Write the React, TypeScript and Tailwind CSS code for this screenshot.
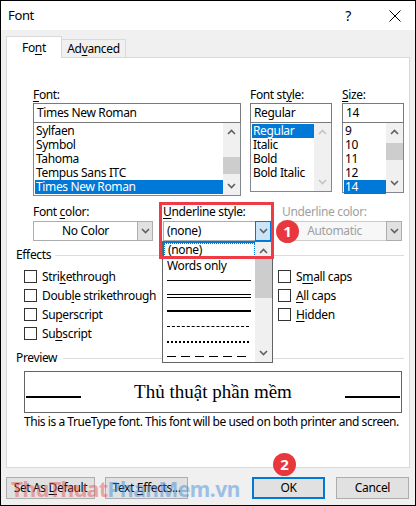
const ui = "font-['Segoe_UI','Noto_Sans',sans-serif] tracking-[-0.35px]";

function U({ children }: { children: React.ReactNode }) {
  return <span className="underline underline-offset-2">{children}</span>;
}

function Chevron({ up = false, light = false }: { up?: boolean; light?: boolean }) {
  return (
    <svg width="9" height="6" viewBox="0 0 9 6" className={up ? "rotate-180" : ""}>
      <path d="M1 1 L4.5 4.5 L8 1" fill="none" stroke={light ? "#c4c4c4" : "#606060"} strokeWidth="1.6" />
    </svg>
  );
}

function Scrollbar({ thumb, light = false }: { thumb?: [number, number]; light?: boolean }) {
  return (
    <div className="relative flex w-[17px] flex-col items-center justify-between bg-[#f0f0f0] py-[6px]">
      <Chevron up light={light} />
      {thumb ? (
        <div className="absolute left-0 w-[17px] bg-[#cdcdcd]" style={{ top: thumb[0], height: thumb[1] }} />
      ) : null}
      <Chevron light={light} />
    </div>
  );
}

function ListBox({ items, sel, h, thumb, light }: { items: string[]; sel: number; h: string; thumb?: [number, number]; light?: boolean }) {
  return (
    <div className={`flex border border-[#828790] bg-white ${h}`}>
      <div className="flex-1 pt-px pl-px">
        {items.map((it, i) => (
          <div
            key={it}
            className={`h-[14px] pl-[1px] text-[12px] leading-[13px] ${i === sel ? "bg-[#0078d7] text-white" : "text-black"}`}
          >
            {it}
          </div>
        ))}
      </div>
      <Scrollbar thumb={thumb} light={light} />
    </div>
  );
}

function Combo({ text, w, center = false, gray = false, pressed = false }: { text: string; w: string; center?: boolean; gray?: boolean; pressed?: boolean }) {
  return (
    <div className={`flex h-[20px] border ${gray ? "border-[#cccccc] bg-[#f7f7f7]" : "border-[#adadad] bg-white"} ${w}`}>
      <div className={`flex-1 text-[12px] leading-[18px] ${center ? "text-center" : "pl-[3px]"} ${gray ? "text-[#a0a0a0]" : "text-black"}`}>
        {text}
      </div>
      <div
        className={`flex w-[16px] items-center justify-center border ${pressed ? "border-[#0078d7] bg-[#cce4f7]" : "border-[#adadad] bg-[#e1e1e1]"} -my-px -mr-px`}
      >
        <Chevron />
      </div>
    </div>
  );
}

function Check({ label }: { label: React.ReactNode }) {
  return (
    <div className="flex h-[19px] items-center gap-[5px]">
      <div className="h-[13px] w-[13px] border border-[#333333] bg-white" />
      <span className="text-[12px] text-black">{label}</span>
    </div>
  );
}

function Section({ title, lineStart }: { title: string; lineStart: string }) {
  return (
    <div className="flex h-[14px] items-center pl-[9px] pr-[5px]">
      <span className="text-[12px] leading-[14px] text-black">{title}</span>
      <div className={`h-px flex-1 bg-[#dcdcdc] ${lineStart}`} />
    </div>
  );
}

function Btn({ children, w, primary = false }: { children: React.ReactNode; w: string; primary?: boolean }) {
  return (
    <div
      className={`flex h-[22px] items-center justify-center whitespace-pre text-[12px] text-black ${w} ${
        primary ? "border-2 border-[#0078d7] bg-[#e1e1e1]" : "border border-[#adadad] bg-[#e1e1e1]"
      }`}
    >
      {children}
    </div>
  );
}

function Badge({ n, className }: { n: string; className: string }) {
  return (
    <div
      className={`absolute flex h-[23px] w-[23px] items-center justify-center rounded-full bg-[#e8383d] text-[15px] font-bold tracking-normal text-white ${className}`}
    >
      {n}
    </div>
  );
}

export default function App() {
  return (
    <div className={`relative flex h-[506px] w-[416px] flex-col border border-black bg-[#f0f0f0] ${ui}`}>
      {/* title bar */}
      <div className="flex h-[29px] items-center bg-white pl-[7px] text-[13px] text-black">
        <span>Font</span>
        <span className="ml-auto mr-[38px] text-[14px]">?</span>
        <svg width="12" height="12" viewBox="0 0 12 12" className="mr-[14px]">
          <path d="M0.5 0.5 L11.5 11.5 M11.5 0.5 L0.5 11.5" stroke="#000" strokeWidth="1" />
        </svg>
      </div>

      <div className="flex flex-1 flex-col pl-[5px] pt-[6px]">
        {/* tabs */}
        <div className="flex h-[21px] items-end">
          <div className="relative z-10 -mb-px flex h-[22px] w-[56px] items-center justify-center border border-b-0 border-[#d9d9d9] bg-white text-[12px] text-black">
            Fo<U>n</U>t
          </div>
          <div className="flex h-[18px] w-[64px] items-center justify-center border border-l-0 border-b-0 border-[#d9d9d9] bg-[#f0f0f0] text-[12px] text-black">
            Ad<U>v</U>anced
          </div>
        </div>

        {/* tab panel */}
        <div className="flex h-[411px] w-[404px] flex-col border border-[#d9d9d9] bg-white">
          <div className="flex pl-[26px] pt-[30px]">
            <div className="w-[208px]">
              <div className="h-[15px] text-[12px] leading-[14px] text-black">
                <U>F</U>ont:
              </div>
              <div className="h-[20px] border border-[#7a7a7a] pl-[3px] text-[12px] leading-[18px] text-black">Times New Roman</div>
              <ListBox
                items={["Sylfaen", "Symbol", "Tahoma", "Tempus Sans ITC", "Times New Roman"]}
                sel={4}
                h="h-[73px] border-t-0"
                thumb={[34, 17]}
              />
            </div>
            <div className="ml-[9px] w-[82px]">
              <div className="h-[15px] text-[12px] leading-[14px] text-black">
                Font st<U>y</U>le:
              </div>
              <div className="h-[20px] border border-[#7a7a7a] pl-[3px] text-[12px] leading-[18px] text-black">Regular</div>
              <ListBox items={["Regular", "Italic", "Bold", "Bold Italic"]} sel={0} h="h-[69px] border-t-0" light />
            </div>
            <div className="ml-[10px] w-[62px]">
              <div className="h-[15px] text-[12px] leading-[14px] text-black">
                <U>S</U>ize:
              </div>
              <div className="h-[20px] border border-[#7a7a7a] pl-[3px] text-[12px] leading-[18px] text-black">14</div>
              <ListBox items={["9", "10", "11", "12", "14"]} sel={4} h="h-[70px] border-t-0" thumb={[20, 17]} />
            </div>
          </div>

          {/* colour / underline row */}
          <div className="mt-[9px] flex pl-[26px]">
            <div className="w-[120px]">
              <div className="h-[16px] text-[12px] leading-[14px] text-black">
                Font <U>c</U>olor:
              </div>
              <Combo text="No Color" w="w-[120px]" center />
            </div>
            <div className="ml-[10px] w-[108px]">
              <div className="h-[16px] text-[12px] leading-[14px] text-black">
                <U>U</U>nderline style:
              </div>
              <Combo text="(none)" w="w-[108px]" pressed />
            </div>
            <div className="ml-[11px] w-[120px]">
              <div className="h-[16px] text-[12px] leading-[14px] text-[#a0a0a0]">Underline color:</div>
              <Combo text="Automatic" w="w-[120px]" center gray />
            </div>
          </div>

          <div className="mt-[7px]">
            <Section title="Effects" lineStart="ml-[4px]" />
          </div>

          <div className="mt-[5px] grid grid-cols-[254px_1fr] pl-[17px]">
            <div>
              <Check label={<>Stri<U>k</U>ethrough</>} />
              <Check label={<>Doub<U>l</U>e strikethrough</>} />
              <Check label={<>Su<U>p</U>erscript</>} />
              <Check label={<>Su<U>b</U>script</>} />
            </div>
            <div>
              <Check label={<>S<U>m</U>all caps</>} />
              <Check label={<><U>A</U>ll caps</>} />
              <Check label={<><U>H</U>idden</>} />
            </div>
          </div>

          <div className="mt-[8px]">
            <Section title="Preview" lineStart="ml-[6px]" />
          </div>

          <div className="ml-[17px] mt-[6px] flex h-[42px] w-[378px] items-center justify-between border border-[#646464] px-px">
            <div className="mt-[10px] h-[1.5px] w-[55px] bg-black" />
            <span className="font-['Times_New_Roman','Liberation_Serif',serif] text-[19px] tracking-normal text-black">Thủ thuật phần mềm</span>
            <div className="mt-[10px] h-[1.5px] w-[55px] bg-black" />
          </div>

          <div className="ml-[17px] mt-[2px] whitespace-nowrap text-[12px] leading-[14px] tracking-[-0.45px] text-black">
            This is a TrueType font. This font will be used on both printer and screen.
          </div>
        </div>

        {/* buttons */}
        <div className="mt-[9px] flex items-center">
          <Btn w="w-[89px]">
            {"Set As "}
            <U>D</U>efault
          </Btn>
          <div className="ml-[10px]">
            <Btn w="w-[83px]">
              {"Text "}
              <U>E</U>ffects...
            </Btn>
          </div>
          <div className="ml-[64px]">
            <Btn w="w-[73px]" primary>
              OK
            </Btn>
          </div>
          <div className="ml-[11px]">
            <Btn w="w-[73px]">Cancel</Btn>
          </div>
        </div>
      </div>

      {/* open dropdown list */}
      <div className="absolute left-[161px] top-[240px] flex h-[122px] w-[111px] border border-[#646464] bg-white">
        <div className="flex-1 pl-px pt-px">
          <div className="h-[14px] border border-dotted border-[#0078d7] bg-white pl-[3px] text-[12px] leading-[12px] text-black outline outline-1 outline-[#0078d7]">
            (none)
          </div>
          <div className="h-[15px] pl-[3px] pt-[2px] text-[12px] leading-[14px] text-black">Words only</div>
          <div className="ml-[3px] mr-[4px] mt-[8px] h-px bg-black" />
          <div className="ml-[3px] mr-[4px] mt-[13px] h-px bg-black" />
          <div className="ml-[3px] mr-[4px] mt-[2px] h-px bg-black" />
          <div className="ml-[3px] mr-[4px] mt-[12px] h-[2px] bg-black" />
          <div className="ml-[3px] mr-[6px] mt-[14px] h-px border-t border-dashed border-black" />
          <div className="ml-[3px] mr-[6px] mt-[14px] h-[2px] border-t-2 border-dotted border-black" />
          <div className="ml-[3px] mr-[6px] mt-[13px] h-px bg-[repeating-linear-gradient(90deg,#000_0_9px,transparent_9px_14px)]" />
        </div>
        <Scrollbar thumb={[16, 40]} />
      </div>

      {/* highlight box */}
      <div className="absolute left-[158px] top-[201px] h-[57px] w-[115px] border-[3px] border-[#ef3b43]" />

      <Badge n="1" className="left-[275px] top-[219px]" />
      <Badge n="2" className="left-[272px] top-[452px]" />

      {/* watermark */}
      <div className="pointer-events-none absolute left-[10px] top-[476px] text-[21px] font-bold leading-[24px] tracking-[-0.5px] opacity-50">
        <span className="text-[#e35d5d]">ThuThuat</span>
        <span className="text-[#4a90d9]">PhanMem.vn</span>
      </div>
    </div>
  );
}
